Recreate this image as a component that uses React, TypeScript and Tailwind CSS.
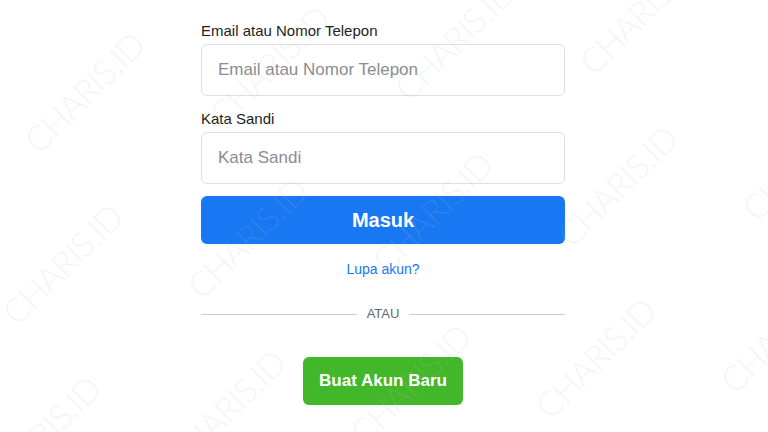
const WATERMARK_ORIGIN = { x: 84, y: 92 };
const STEP_ACROSS = { x: 185, y: -26 };
const STEP_DOWN = { x: -22, y: 172 };

function Watermarks() {
  const marks: { x: number; y: number }[] = [];
  for (let i = -2; i <= 6; i++) {
    for (let j = -2; j <= 3; j++) {
      const x = WATERMARK_ORIGIN.x + i * STEP_ACROSS.x + j * STEP_DOWN.x;
      const y = WATERMARK_ORIGIN.y + i * STEP_ACROSS.y + j * STEP_DOWN.y;
      if (x < -100 || x > 870 || y < -100 || y > 530) continue;
      marks.push({ x, y });
    }
  }

  return (
    <div className="pointer-events-none absolute inset-0 overflow-hidden">
      {marks.map((m, index) => (
        <span
          key={index}
          className="absolute -translate-x-1/2 -translate-y-1/2 -rotate-45 whitespace-nowrap font-['Lato',sans-serif] text-[34px] font-light leading-none tracking-[-1px] text-[rgba(190,190,190,0.16)]"
          style={{ left: m.x, top: m.y }}
        >
          CHARIS.ID
        </span>
      ))}
    </div>
  );
}

function Field({ label, type = 'text' }: { label: string; type?: string }) {
  return (
    <div>
      <label className="mb-[3px] block text-[15px] leading-5 text-[#1c1e21]">{label}</label>
      <input
        type={type}
        placeholder={label}
        className="block h-[52px] w-full rounded-md border border-[#dddfe2] bg-white px-4 text-[17px] text-[#1c1e21] outline-none placeholder:text-[#8a8d91]"
      />
    </div>
  );
}

export default function App() {
  return (
    <div className="relative flex h-[432px] w-full justify-center overflow-hidden bg-white pr-[2px] font-['Liberation_Sans',Arial,sans-serif]">
      <div className="flex w-[364px] flex-col pt-[21px]">
        <Field label="Email atau Nomor Telepon" />
        <div className="mt-[13px]">
          <Field label="Kata Sandi" type="password" />
        </div>
        <button
          type="button"
          className="mt-3 h-12 w-full rounded-md bg-[#1877f2] text-[20px] font-bold text-white"
        >
          Masuk
        </button>
        <a href="#" className="mt-[15px] block text-center text-sm leading-5 text-[#1877f2]">
          Lupa akun?
        </a>
        <div className="mt-[25px] flex h-5 items-center gap-[10px]">
          <div className="h-px flex-1 bg-[#c9ccd1]" />
          <span className="text-[13px] leading-5 text-[#606770]">ATAU</span>
          <div className="h-px flex-1 bg-[#c9ccd1]" />
        </div>
        <div className="mt-[33px] flex justify-center">
          <button
            type="button"
            className="h-12 rounded-md bg-[#42b72a] px-4 text-[17px] font-bold text-white"
          >
            Buat Akun Baru
          </button>
        </div>
      </div>
      <Watermarks />
    </div>
  );
}
